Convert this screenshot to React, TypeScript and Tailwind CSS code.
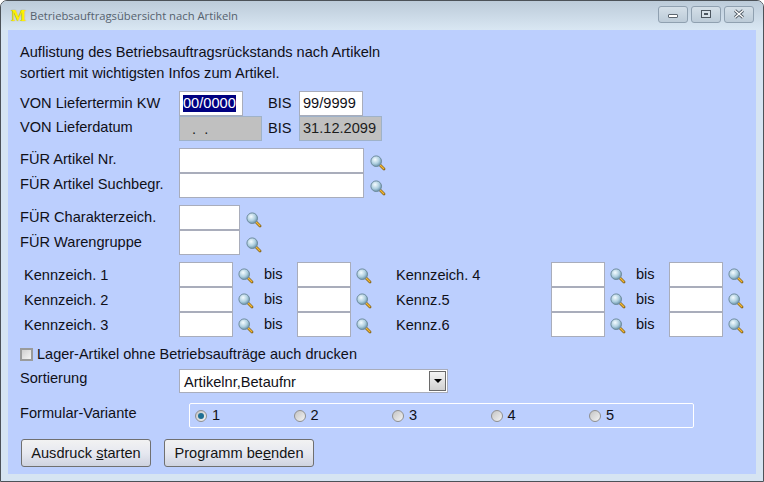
const FONT = "font-['Liberation_Sans',Arial,sans-serif]";

function Lens() {
  return (
    <svg width="16" height="16" viewBox="0 0 16 16" className="shrink-0">
      <defs>
        <radialGradient id="lens" cx="0.4" cy="0.35" r="0.7">
          <stop offset="0" stopColor="#f4fbff" />
          <stop offset="0.55" stopColor="#b0d0e0" />
          <stop offset="1" stopColor="#5f8aa2" />
        </radialGradient>
      </defs>
      <path d="M9.500 9.500l4.500 4.500" stroke="#80601a" strokeWidth="2.800" strokeLinecap="round" />
      <path d="M9.800 9.800l4 4" stroke="#f2b632" strokeWidth="1.400" strokeLinecap="round" />
      <circle cx="6.200" cy="6.200" r="5.300" fill="url(#lens)" stroke="#6f8c9e" strokeWidth="1" />
    </svg>
  );
}

function Field({ width, children, tone = "plain" }: { width: string; children?: React.ReactNode; tone?: "plain" | "off" }) {
  const look = tone === "off" ? "border-[#9fb2c8] bg-[#c0c0c0] text-[#1c1c1c]" : "border-[#a9adbb] bg-white";
  return <div className={`${width} flex h-[25px] shrink-0 items-center border px-[3px] ${look}`}>{children}</div>;
}

function SearchRow({ label, width, low = false }: { label: string; width: string; low?: boolean }) {
  return (
    <div className="flex h-[25px] items-center">
      <span className={low ? "w-[159px] shrink-0" : "w-[159px] shrink-0 -translate-y-px"}>{label}</span>
      <Field width={width} />
      <span className="ml-[6px] mt-[4px]"><Lens /></span>
    </div>
  );
}

function Mark({ label }: { label: string }) {
  return (
    <div className="flex h-[25px] items-center">
      <span className="w-[155px] shrink-0 translate-y-px">{label}</span>
      <Field width="w-[54px]" />
      <span className="ml-[5px] mt-[2px]"><Lens /></span>
      <span className="ml-[10px] w-[33px] shrink-0">bis</span>
      <Field width="w-[54px]" />
      <span className="ml-[5px] mt-[2px]"><Lens /></span>
    </div>
  );
}

function Radio({ label, on = false }: { label: string; on?: boolean }) {
  return (
    <div className="flex w-[98.5px] shrink-0 items-center gap-[5px]">
      <span className="flex size-[12px] items-center justify-center rounded-full border border-[#8f8f8f] bg-gradient-to-br from-[#c4c4c4] to-[#f4f4f4]">
        {on && <span className="size-[6px] rounded-full bg-[#1f6f94]" />}
      </span>
      <span>{label}</span>
    </div>
  );
}

function Btn({ width, children }: { width: string; children: React.ReactNode }) {
  return (
    <button className={`${width} h-[28px] rounded-[3px] border border-[#707070] bg-gradient-to-b from-[#f2f2f2] via-[#e6e8f0] to-[#cfd3e0] text-center text-[#141414]`}>
      {children}
    </button>
  );
}

function Caption({ children }: { children: React.ReactNode }) {
  return (
    <div className="flex h-[17px] w-[30px] items-center justify-center rounded-[3px] border border-[#8fa0b0] bg-gradient-to-b from-[#d4dfe8] to-[#bccbd8]">
      {children}
    </div>
  );
}

export default function App() {
  return (
    <div className={`${FONT} flex h-[482px] w-[764px] flex-col overflow-hidden rounded-t-[7px] border border-[#4c5258] bg-[#d6e4f2] text-[14.6px] leading-none text-[#101018]`}>
      <div className="flex h-[29px] shrink-0 items-center bg-gradient-to-b from-[#bccbd9] to-[#d9e7f3] pl-[10px] pr-[9px]">
        <span className="font-['Liberation_Serif',serif] text-[16px] font-bold text-[#fff200] [text-shadow:0_0_1px_#8a7a00]">M</span>
        <span className="ml-[4px] font-['Open_Sans',sans-serif] text-[11.25px] text-[#56626e]">Betriebsauftragsübersicht nach Artikeln</span>
        <div className="ml-auto mb-[3px] flex gap-[3px]">
          <Caption><span className="mt-[4px] h-[4px] w-[10px] rounded-[1px] border border-[#5c6670] bg-white" /></Caption>
          <Caption><span className="flex h-[8px] w-[10px] items-center justify-center border border-[#4c5660] bg-[#d8e2ea]"><span className="h-[2px] w-[4px] border border-[#4c5660]" /></span></Caption>
          <Caption>
            <svg width="12" height="10" viewBox="0 0 12 10"><path d="M2 1.500l8 7M10 1.500l-8 7" stroke="#4c5660" strokeWidth="3" /><path d="M2 1.500l8 7M10 1.500l-8 7" stroke="#fff" strokeWidth="1.400" /></svg>
          </Caption>
        </div>
      </div>

      <div className="mx-[7px] flex h-[444px] shrink-0 flex-col bg-[#bccffe] pl-[12px]">
        <p className="mt-[12px] leading-[21px]">
          Auflistung des Betriebsauftragsrückstands nach Artikeln
          <br />
          sortiert mit wichtigsten Infos zum Artikel.
        </p>

        <div className="mt-[7px] flex h-[25px] items-center">
          <span className="w-[159px] shrink-0">VON Liefertermin KW</span>
          <Field width="w-[64px]"><span className="bg-[#000080] py-[1px] text-white">00/0000</span></Field>
          <span className="ml-[25px] w-[31px] shrink-0">BIS</span>
          <Field width="w-[64px]">99/9999</Field>
        </div>
        <div className="flex h-[25px] items-center">
          <span className="w-[159px] shrink-0 -translate-y-px">VON Lieferdatum</span>
          <Field width="w-[83px]" tone="off"><span className="translate-y-px whitespace-pre pl-[9px]">.  .</span></Field>
          <span className="ml-[6px] w-[31px] shrink-0">BIS</span>
          <Field width="w-[83px]" tone="off">31.12.2099</Field>
        </div>

        <div className="mt-[7px]">
          <SearchRow label="FÜR Artikel Nr." width="w-[185px]" />
          <SearchRow label="FÜR Artikel Suchbegr." width="w-[185px]" />
        </div>

        <div className="mt-[7px]">
          <SearchRow label="FÜR Charakterzeich." width="w-[61px]" low />
          <SearchRow label="FÜR Warengruppe" width="w-[61px]" low />
        </div>

        <div className="mt-[7px] flex pl-[4px]">
          <div className="w-[372px] shrink-0">
            <Mark label="Kennzeich. 1" />
            <Mark label="Kennzeich. 2" />
            <Mark label="Kennzeich. 3" />
          </div>
          <div>
            <Mark label="Kennzeich. 4" />
            <Mark label="Kennz.5" />
            <Mark label="Kennz.6" />
          </div>
        </div>

        <div className="mt-[10px] flex h-[15px] items-center gap-[4px]">
          <span className="flex size-[13px] items-center justify-center border-2 border-[#9a9b9b] bg-white">
            <span className="size-[9px] bg-gradient-to-br from-[#cfcfcf] to-[#f4f4f4]" />
          </span>
          <span className="text-[14.5px]">Lager-Artikel ohne Betriebsaufträge auch drucken</span>
        </div>

        <div className="mt-[7px] flex h-[24px] items-center">
          <span className="w-[159px] shrink-0 -translate-y-[3px]">Sortierung</span>
          <div className="flex h-[24px] w-[269px] items-center justify-between border border-[#a9adbb] bg-white pl-[4px] pr-px">
            <span className="translate-y-px">Artikelnr,Betaufnr</span>
            <span className="flex h-[20px] w-[17px] items-center justify-center border border-[#6a6a6a] bg-gradient-to-b from-[#f4f4f4] to-[#d0d0d0]">
              <span className="size-0 border-x-[4px] border-t-[4px] border-x-transparent border-t-black" />
            </span>
          </div>
        </div>

        <div className="mt-[10px] flex h-[25px] items-center">
          <span className="w-[169px] shrink-0 -translate-y-0.5">Formular-Variante</span>
          <div className="flex h-[25px] w-[505px] items-center rounded-[2px] border border-white pl-[5px]">
            <Radio label="1" on />
            <Radio label="2" />
            <Radio label="3" />
            <Radio label="4" />
            <Radio label="5" />
          </div>
        </div>

        <div className="mt-[11px] flex gap-[13px] pl-px">
          <Btn width="w-[130px]">Ausdruck <span className="underline">s</span>tarten</Btn>
          <Btn width="w-[150px]">Programm be<span className="underline">e</span>nden</Btn>
        </div>
      </div>
    </div>
  );
}
